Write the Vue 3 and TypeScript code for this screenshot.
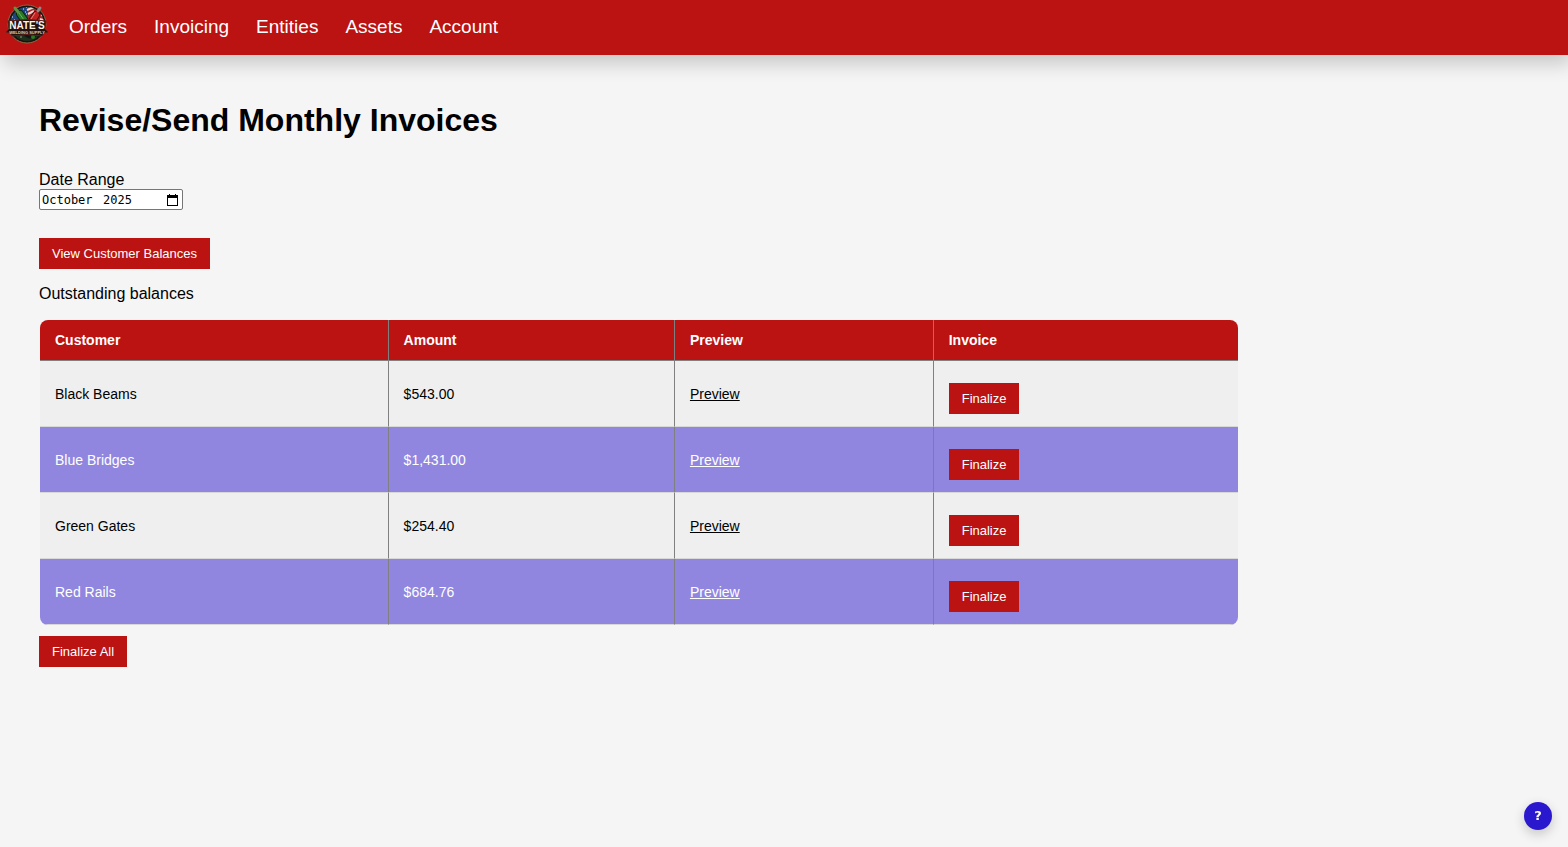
<script setup lang="ts">
import { ref } from 'vue'

interface Balance {
  customer: string
  amount: string
}

const navItems: string[] = ['Orders', 'Invoicing', 'Entities', 'Assets', 'Account']
const month = ref('October')
const year = ref('2025')
const balances = ref<Balance[]>([
  { customer: 'Black Beams', amount: '$543.00' },
  { customer: 'Blue Bridges', amount: '$1,431.00' },
  { customer: 'Green Gates', amount: '$254.40' },
  { customer: 'Red Rails', amount: '$684.76' },
])
</script>

<template>
  <div class="page">
    <header class="topbar">
      <a href="#" class="logo" aria-label="Nate's Welding Supply">
        <svg viewBox="0 0 42 40" width="42" height="40">
          <defs>
            <clipPath id="badge"><circle cx="21" cy="20" r="17" /></clipPath>
          </defs>
          <circle cx="21" cy="20" r="19" fill="#171310" stroke="#8c6a48" stroke-width="1" />
          <g clip-path="url(#badge)">
            <rect x="3" y="2" width="36" height="36" fill="#111614" />
            <path d="M4 3h19v16H4z" fill="#20447c" />
            <path d="M22 2l9 0 9 6v12H22z" fill="#a52a2c" />
            <path d="M21 6l7-3M22 10l6-3M35 11l4 1M34 15l6 2" stroke="#e3dad8" stroke-width="2" />
            <path d="M17 5h1M20 3h1M19 8h1M6 13h1M8 16h1M20 10h1" stroke="#e6edf5" stroke-width="1" />
            <path d="M10 32q5-3 10 1t12-2l-3 8H13z" fill="#1f311c" />
            <circle cx="27" cy="33" r="2" fill="#2c7a20" />
            <circle cx="15" cy="33" r="1" fill="#70755c" />
          </g>
          <g stroke-linecap="round">
            <path d="M14 10l5 7" stroke="#0b250b" stroke-width="8" />
            <path d="M14 10l5 7" stroke="#2a7b29" stroke-width="6" />
            <path d="M13 9l5 7" stroke="#6eb650" stroke-width="1" />
            <path d="M9 4l3 4" stroke="#5f9343" stroke-width="3" />
            <path d="M30 11l-4 6" stroke="#4a0908" stroke-width="8" />
            <path d="M30 11l-4 6" stroke="#c22222" stroke-width="6" />
            <path d="M29 9l-4 6" stroke="#f08270" stroke-width="1" />
            <path d="M34 4l-2 3" stroke="#8b8986" stroke-width="3" />
          </g>
          <path d="M2 17q19-3 38 0l-1 8 3 3-4 1-2 3q-15-3-30 0l-2-3-4-1 3-3z" fill="#24100e" stroke="#5f211a" stroke-width="1" />
          <text x="21" y="25" text-anchor="middle" class="logo-name">NATE'S</text>
          <text x="21" y="30" text-anchor="middle" class="logo-sub">WELDING SUPPLY</text>
        </svg>
      </a>
      <nav class="nav">
        <a v-for="item in navItems" :key="item" href="#">{{ item }}</a>
      </nav>
    </header>

    <main class="content">
      <h1>Revise/Send Monthly Invoices</h1>

      <div class="field">
        <label for="range">Date Range</label>
        <div class="month-box">
          <input id="range" v-model="month" class="month" type="text" />
          <input v-model="year" class="year" type="text" aria-label="Year" />
          <button type="button" class="picker" aria-label="Show month picker">
            <svg viewBox="0 0 11 12" width="11" height="12">
              <path d="M2 0h1v1h5V0h1v1h2v11H0V1h2zM1 4v7h9V4z" fill="#000" fill-rule="evenodd" />
            </svg>
          </button>
        </div>
      </div>

      <button type="button" class="btn">View Customer Balances</button>

      <p class="caption">Outstanding balances</p>

      <div class="table-wrap">
        <table>
          <thead>
            <tr>
              <th class="c-customer">Customer</th>
              <th class="c-amount">Amount</th>
              <th class="c-preview">Preview</th>
              <th>Invoice</th>
            </tr>
          </thead>
          <tbody>
            <tr v-for="row in balances" :key="row.customer">
              <td>{{ row.customer }}</td>
              <td>{{ row.amount }}</td>
              <td><a href="#">Preview</a></td>
              <td class="action"><button type="button" class="btn">Finalize</button></td>
            </tr>
          </tbody>
        </table>
      </div>

      <button type="button" class="btn">Finalize All</button>
    </main>

    <button type="button" class="help" aria-label="Help">?</button>
  </div>
</template>

<style>
body {
  background: #f5f5f5;
}
</style>

<style scoped>
.page {
  min-height: 100vh;
  background: #f5f5f5;
  color: #000;
  font-family: "Liberation Sans", Arial, sans-serif;
  font-size: 16px;
  line-height: 18px;
}
.topbar {
  display: flex;
  align-items: flex-start;
  box-sizing: border-box;
  height: 55px;
  padding: 4px 6px;
  background: #bb1212;
  box-shadow: 4px 8px 20px rgba(0, 0, 0, 0.2);
}
.logo {
  display: block;
  height: 40px;
}
.logo-name {
  fill: #fff4e5;
  font-size: 10px;
  font-weight: 900;
}
.logo-sub {
  fill: #d8ccba;
  font-size: 4px;
  font-weight: 700;
}
.nav {
  display: flex;
  gap: 27px;
  padding: 12px 21px;
}
.nav a {
  color: #fff;
  font-size: 19px;
  line-height: 22px;
  text-decoration: none;
}
.content {
  max-width: 1200px;
  padding: 46px 39px 0;
}
h1 {
  margin: 0 0 32px;
  font-size: 32px;
  line-height: 38px;
}
.field {
  display: flex;
  flex-direction: column;
  align-items: flex-start;
  margin-bottom: 28px;
}
.month-box {
  display: flex;
  align-items: center;
  box-sizing: border-box;
  width: 144px;
  height: 21px;
  padding: 0 4px 0 2px;
  border: 1px solid #767676;
  border-radius: 2px;
  background: #fff;
}
.month-box input {
  box-sizing: border-box;
  height: 16px;
  padding: 0;
  border: 0;
  background: transparent;
  color: #000;
  font-family: "DejaVu Sans Mono", monospace;
  font-size: 12px;
}
.month {
  width: 61px;
}
.year {
  width: 36px;
}
.picker {
  display: flex;
  margin-left: auto;
  padding: 0;
  border: 0;
  background: transparent;
}
.btn {
  display: block;
  padding: 8px 13px;
  border: 0;
  background: #bb1212;
  color: #fff;
  font-family: inherit;
  font-size: 13px;
  font-weight: 500;
  line-height: 15px;
}
.caption {
  margin: 16px 0 17px;
}
.table-wrap {
  margin: 0 1px 11px;
  overflow: hidden;
  border-radius: 8px;
}
table {
  width: 100%;
  table-layout: fixed;
  border-collapse: separate;
  border-spacing: 0;
  font-size: 14px;
  line-height: 16px;
}
th,
td {
  box-sizing: border-box;
  padding: 0 15px;
  border-right: 1px solid #808080;
  border-bottom: 1px solid #d8d8d8;
  text-align: left;
}
th:last-child,
td:last-child {
  border-right: 0;
}
th {
  height: 41px;
  border-bottom-color: #808080;
  background: #bb1212;
  color: #fff;
}
td {
  height: 66px;
  background: #efefef;
}
tbody tr:nth-child(even) td {
  background: #9086df;
  color: #fff;
}
td a {
  color: inherit;
}
td.action {
  padding-top: 10px;
}
.c-customer {
  width: 29.1%;
}
.c-amount {
  width: 23.9%;
}
.c-preview {
  width: 21.6%;
}
.help {
  position: fixed;
  right: 16px;
  bottom: 17px;
  width: 28px;
  height: 28px;
  padding: 0 0 1px;
  border: 0;
  border-radius: 50%;
  background: #2a18cf;
  box-shadow: 0 4px 12px rgba(0, 0, 0, 0.2);
  color: #fff;
  font-family: "DejaVu Sans", sans-serif;
  font-size: 13px;
  font-weight: 700;
}
</style>
